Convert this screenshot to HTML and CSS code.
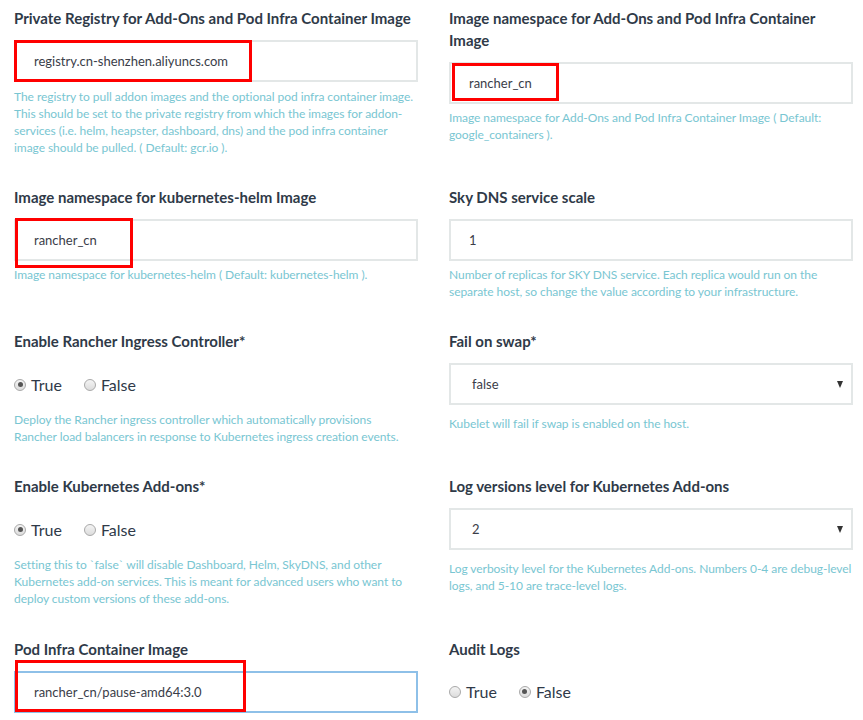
FILE: index.html
```html
<!DOCTYPE html>
<html>
<head>
<meta charset="utf-8">
<link rel="stylesheet" href="styles.css">
</head>
<body>
<div class="form">
  <div class="row">
    <div class="field">
      <label class="lbl">Private Registry for Add-Ons and Pod Infra Container Image</label>
      <div class="control">
        <div class="input">registry.cn-shenzhen.aliyuncs.com</div>
        <span class="mark m1"></span>
      </div>
      <p class="help first">The registry to pull addon images and the optional pod infra container image. This should be set to the private registry from which the images for addon-services (i.e. helm, heapster, dashboard, dns) and the pod infra container image should be pulled. ( Default: gcr.io ).</p>
    </div>
    <div class="field">
      <label class="lbl">Image namespace for Add-Ons and Pod Infra Container Image</label>
      <div class="control">
        <div class="input">rancher_cn</div>
        <span class="mark m2"></span>
      </div>
      <p class="help">Image namespace for Add-Ons and Pod Infra Container Image ( Default: google_containers ).</p>
    </div>
  </div>

  <div class="row">
    <div class="field">
      <label class="lbl">Image namespace for kubernetes-helm Image</label>
      <div class="control">
        <div class="input">rancher_cn</div>
        <span class="mark m3"></span>
      </div>
      <p class="help">Image namespace for kubernetes-helm ( Default: kubernetes-helm ).</p>
    </div>
    <div class="field">
      <label class="lbl">Sky DNS service scale</label>
      <div class="control">
        <div class="input">1</div>
      </div>
      <p class="help">Number of replicas for SKY DNS service. Each replica would run on the separate host, so change the value according to your infrastructure.</p>
    </div>
  </div>

  <div class="row">
    <div class="field">
      <label class="lbl">Enable Rancher Ingress Controller*</label>
      <div class="radios">
        <span class="radio"><span class="dot on"></span>True</span>
        <span class="radio"><span class="dot"></span>False</span>
      </div>
      <p class="help">Deploy the Rancher ingress controller which automatically provisions Rancher load balancers in response to Kubernetes ingress creation events.</p>
    </div>
    <div class="field">
      <label class="lbl">Fail on swap*</label>
      <div class="control">
        <div class="input select">false<span class="caret"></span></div>
      </div>
      <p class="help loose">Kubelet will fail if swap is enabled on the host.</p>
    </div>
  </div>

  <div class="row">
    <div class="field">
      <label class="lbl">Enable Kubernetes Add-ons*</label>
      <div class="radios">
        <span class="radio"><span class="dot on"></span>True</span>
        <span class="radio"><span class="dot"></span>False</span>
      </div>
      <p class="help">Setting this to `false` will disable Dashboard, Helm, SkyDNS, and other Kubernetes add-on services. This is meant for advanced users who want to deploy custom versions of these add-ons.</p>
    </div>
    <div class="field">
      <label class="lbl">Log versions level for Kubernetes Add-ons</label>
      <div class="control">
        <div class="input select">2<span class="caret"></span></div>
      </div>
      <p class="help loose">Log verbosity level for the Kubernetes Add-ons. Numbers 0-4 are debug-level logs, and 5-10 are trace-level logs.</p>
    </div>
  </div>

  <div class="row">
    <div class="field">
      <label class="lbl">Pod Infra Container Image</label>
      <div class="control">
        <div class="input focus">rancher_cn/pause-amd64:3.0</div>
        <span class="mark m4"></span>
      </div>
    </div>
    <div class="field">
      <label class="lbl">Audit Logs</label>
      <div class="radios last">
        <span class="radio"><span class="dot"></span>True</span>
        <span class="radio"><span class="dot on"></span>False</span>
      </div>
    </div>
  </div>
</div>
</body>
</html>
```

FILE: styles.css
```css
* { box-sizing: border-box; }
html, body { margin: 0; padding: 0; background: #fff; }
body {
  font-family: Lato, "Open Sans", sans-serif;
  color: #2f3a48;
  width: 863px;
  height: 720px;
  overflow: hidden;
}
.form { padding: 7px 10px 0 14px; }
.row {
  display: grid;
  grid-template-columns: 404px 404px;
  column-gap: 31px;
  margin-bottom: 30px;
}
.row:nth-child(4) { margin-bottom: 31px; }
.field { display: flex; flex-direction: column; }
.field:first-child .help { padding-right: 2px; }
.lbl {
  display: block;
  font-size: 15px;
  font-weight: 700;
  line-height: 22px;
  color: #2f3a48;
  margin-bottom: 11px;
}
.control { position: relative; }
.input {
  height: 42px;
  border: 2px solid #e3e7e7;
  background: #fff;
  padding: 0 18px;
  font-size: 13px;
  line-height: 38px;
  color: #3a3d48;
}
.input.focus { border-color: #8ec0e8; }
.input.select { position: relative; padding-left: 21px; }
.caret {
  position: absolute;
  right: 8px;
  top: 16px;
  width: 0; height: 0;
  border-left: 3.5px solid transparent;
  border-right: 3.5px solid transparent;
  border-top: 7px solid #333;
}
.help {
  margin: 5px 0 0 0;
  font-size: 12px;
  line-height: 17px;
  letter-spacing: -0.05px;
  color: #79c6d2;
}
.help.first { margin-top: 6px; }
.help.loose { margin-top: 10px; }
.radios {
  display: flex;
  gap: 22px;
  height: 43px;
  align-items: center;
  font-size: 16px;
  color: #2f3a48;
}
.radios.last { height: 41px; }
.radio { display: inline-flex; align-items: center; gap: 5px; }
.dot {
  width: 12px; height: 12px;
  border-radius: 50%;
  border: 1px solid #a9a9a9;
  background: linear-gradient(#f4f4f4, #dcdcdc);
  position: relative;
}
.dot.on::after {
  content: "";
  position: absolute;
  left: 2.5px; top: 2.5px;
  width: 5px; height: 5px;
  border-radius: 50%;
  background: #555;
}
.mark {
  position: absolute;
  border: 3px solid #f00;
  pointer-events: none;
}
.m1 { left: 0; top: 0; width: 238px; height: 42px; }
.m2 { left: 3px; top: 1px; width: 107px; height: 38px; }
.m3 { left: 1px; top: -1px; width: 118px; height: 50px; }
.m4 { left: 1px; top: -11px; width: 231px; height: 52px; }
```
